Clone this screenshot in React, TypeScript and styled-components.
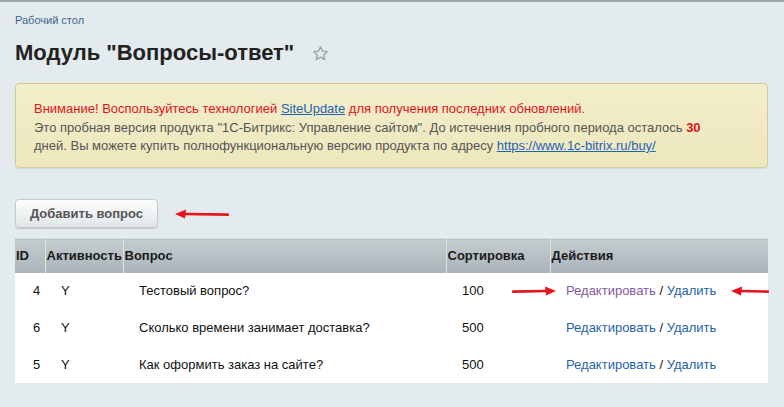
import React from 'react';
import styled, { createGlobalStyle } from 'styled-components';

const GlobalStyle = createGlobalStyle`
  html, body {
    margin: 0;
    padding: 0;
    background: #e4ebee;
  }
  body {
    font-family: "Liberation Sans", Arial, sans-serif;
    color: #000;
  }
`;

const Page = styled.div`
  min-height: 407px;
  box-sizing: border-box;
  border-top: 2px solid #9ea6aa;
  padding: 0 16px 0 15px;
`;

const Breadcrumb = styled.a`
  display: block;
  margin-top: 11px;
  font-size: 11px;
  line-height: 14px;
  color: #3b6692;
  text-decoration: none;
`;

const TitleRow = styled.div`
  display: flex;
  align-items: center;
  gap: 18px;
  margin-top: 11px;
  height: 30px;
`;

const Title = styled.h1`
  margin: 0;
  font-size: 22px;
  font-weight: bold;
  color: #222;
  line-height: 30px;
`;

const StarIcon = styled.svg`
  width: 17px;
  height: 17px;
  margin-top: 1px;
`;

const Alert = styled.div`
  margin-top: 15px;
  box-sizing: border-box;
  height: 85px;
  padding: 16px 40px 0 18px;
  background: linear-gradient(#f3eecb, #ede7bd);
  border: 1px solid #d4ca95;
  border-radius: 4px;
  box-shadow: 0 1px 1px rgba(0, 0, 0, 0.08);
  font-size: 13px;
  line-height: 18.5px;
  color: #555;
`;

const Warning = styled.div`
  color: #e0141a;
`;

const AlertLink = styled.a`
  color: #1d63b5;
  text-decoration: underline;
`;

const Days = styled.b`
  color: #e0141a;
`;

const Toolbar = styled.div`
  display: flex;
  align-items: center;
  gap: 17px;
  margin-top: 31px;
`;

const AddButton = styled.button`
  box-sizing: border-box;
  height: 29px;
  width: 143px;
  padding: 0;
  font-family: inherit;
  font-size: 13px;
  font-weight: bold;
  color: #555;
  background: linear-gradient(#fdfefe, #e0e6e8);
  border: 1px solid #c5cccf;
  border-radius: 4px;
  box-shadow: 0 1px 1px rgba(0, 0, 0, 0.15);
`;

const Table = styled.table`
  margin-top: 10px;
  width: 753px;
  border-collapse: collapse;
  table-layout: fixed;
  background: #fff;
  font-size: 13px;
`;

const Th = styled.th<{ $w: number }>`
  box-sizing: border-box;
  width: ${({ $w }) => $w}px;
  height: 34px;
  padding: 0 0 0 1px;
  text-align: left;
  font-weight: bold;
  color: #1a1a1a;
  background: linear-gradient(#c4ccd0, #aab4b8);
  border-top: 1px solid #d8dee0;
  white-space: nowrap;
  & + & {
    border-left: 1px solid #dde2e4;
  }
`;

const Td = styled.td<{ $pad?: number }>`
  position: relative;
  height: 36.7px;
  padding: 0 0 0 ${({ $pad }) => $pad ?? 16}px;
  color: #111;
  white-space: nowrap;
`;

const Link = styled.a<{ $visited?: boolean }>`
  color: ${({ $visited }) => ($visited ? '#8559a0' : '#2563a9')};
  text-decoration: none;
`;

const ArrowSpot = styled.span<{ $left: number }>`
  position: absolute;
  top: 50%;
  left: ${({ $left }) => $left}px;
  transform: translateY(-50%);
  line-height: 0;
`;

const RedArrow = ({ dir, width }: { dir: 'left' | 'right'; width: number }) => (
  <svg width={width} height="10" viewBox={`0 0 ${width} 10`}>
    {dir === 'left' ? (
      <>
        <path d={`M9 5 L${width - 1} 5.6`} stroke="#e8141c" strokeWidth="2.6" strokeLinecap="round" />
        <path d="M0 5 L11 0.5 L10 9.5 Z" fill="#e8141c" />
      </>
    ) : (
      <>
        <path d={`M1 5.6 L${width - 9} 5`} stroke="#e8141c" strokeWidth="2.6" strokeLinecap="round" />
        <path d={`M${width} 5 L${width - 11} 0.5 L${width - 10} 9.5 Z`} fill="#e8141c" />
      </>
    )}
  </svg>
);

const rows = [
  { id: 4, active: 'Y', q: 'Тестовый вопрос?', sort: 100 },
  { id: 6, active: 'Y', q: 'Сколько времени занимает доставка?', sort: 500 },
  { id: 5, active: 'Y', q: 'Как оформить заказ на сайте?', sort: 500 },
];

export default function App() {
  return (
    <>
      <GlobalStyle />
      <Page>
        <Breadcrumb href="#">Рабочий стол</Breadcrumb>
        <TitleRow>
          <Title>Модуль "Вопросы-ответ"</Title>
          <StarIcon viewBox="0 0 24 24">
            <path
              d="M12 2.5l2.9 6.1 6.6.8-4.9 4.5 1.3 6.6L12 17.2l-5.9 3.3 1.3-6.6-4.9-4.5 6.6-.8z"
              fill="none"
              stroke="#9aa3a7"
              strokeWidth="2"
              strokeLinejoin="round"
            />
          </StarIcon>
        </TitleRow>
        <Alert>
          <Warning>
            Внимание! Воспользуйтесь технологией <AlertLink href="#">SiteUpdate</AlertLink> для получения
            последних обновлений.
          </Warning>
          Это пробная версия продукта "1С-Битрикс: Управление сайтом". До истечения пробного периода осталось{' '}
          <Days>30</Days> дней. Вы можете купить полнофункциональную версию продукта по адресу{' '}
          <AlertLink href="#">https://www.1c-bitrix.ru/buy/</AlertLink>
        </Alert>
        <Toolbar>
          <AddButton>Добавить вопрос</AddButton>
          <RedArrow dir="left" width={54} />
        </Toolbar>
        <Table>
          <thead>
            <tr>
              <Th $w={30}>ID</Th>
              <Th $w={78}>Активность</Th>
              <Th $w={323}>Вопрос</Th>
              <Th $w={104}>Сортировка</Th>
              <Th $w={218}>Действия</Th>
            </tr>
          </thead>
          <tbody>
            {rows.map((r, i) => (
              <tr key={r.id}>
                <Td $pad={18}>{r.id}</Td>
                <Td>{r.active}</Td>
                <Td>{r.q}</Td>
                <Td>
                  {r.sort}
                  {i === 0 && (
                    <ArrowSpot $left={66}>
                      <RedArrow dir="right" width={44} />
                    </ArrowSpot>
                  )}
                </Td>
                <Td>
                  <Link href="#" $visited={i === 0}>
                    Редактировать
                  </Link>{' '}
                  / <Link href="#">Удалить</Link>
                  {i === 0 && (
                    <ArrowSpot $left={181}>
                      <RedArrow dir="left" width={38} />
                    </ArrowSpot>
                  )}
                </Td>
              </tr>
            ))}
          </tbody>
        </Table>
      </Page>
    </>
  );
}
